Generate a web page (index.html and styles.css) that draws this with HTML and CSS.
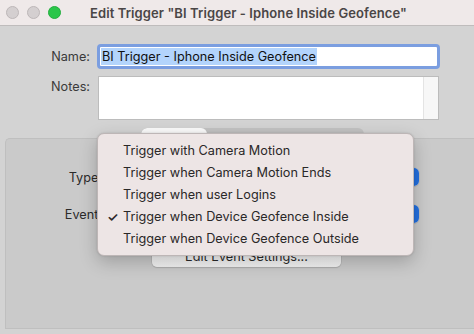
FILE: index.html
```html
<!DOCTYPE html>
<html>
<head>
<meta charset="utf-8">
<link rel="stylesheet" href="styles.css">
</head>
<body>
<div class="window">
  <div class="titlebar">
    <div class="lights">
      <span class="light"></span>
      <span class="light"></span>
      <span class="light green"></span>
    </div>
    <div class="title">Edit Trigger "BI Trigger - Iphone Inside Geofence"</div>
  </div>
  <div class="form">
    <div class="row">
      <label class="lbl">Name:</label>
      <div class="namefield"><span class="sel">BI Trigger - Iphone Inside Geofence</span></div>
    </div>
    <div class="row notes-row">
      <label class="lbl">Notes:</label>
      <div class="notes"><div class="scroll"></div></div>
    </div>
  </div>
  <div class="tabview">
    <div class="tabs">
      <span class="tab active">Trigger</span>
      <span class="tab">Conditions</span>
      <span class="tab">Actions</span>
    </div>
    <div class="box">
      <div class="prow">
        <span class="plbl">Type:</span>
        <div class="popup"><span class="arrow"></span></div>
      </div>
      <div class="prow">
        <span class="plbl">Event:</span>
        <div class="popup"><span class="arrow"></span></div>
      </div>
      <div class="btnrow">
        <div class="btn">Edit Event Settings...</div>
      </div>
    </div>
  </div>
  <div class="menu">
    <div class="item">Trigger with Camera Motion</div>
    <div class="item">Trigger when Camera Motion Ends</div>
    <div class="item">Trigger when user Logins</div>
    <div class="item checked"><span class="check">✓</span>Trigger when Device Geofence Inside</div>
    <div class="item">Trigger when Device Geofence Outside</div>
  </div>
</div>
</body>
</html>
```
FILE: styles.css
```css
html, body {
  margin: 0;
  padding: 0;
}
body {
  width: 474px;
  height: 334px;
  overflow: hidden;
  background: #d3d3d3;
  font-family: Inter, "Noto Sans", sans-serif;
  font-size: 12.7px;
  color: #2b2b2b;
}
.window {
  position: relative;
  width: 474px;
  height: 334px;
  overflow: hidden;
}
.titlebar {
  height: 26px;
  background: #efe9e9;
  border-bottom: 1px solid #bfbcbc;
  display: flex;
  align-items: center;
  box-sizing: border-box;
}
.lights {
  display: flex;
  gap: 8px;
  padding-left: 6px;
}
.light {
  width: 11px;
  height: 11px;
  border-radius: 50%;
  background: #d4cfd0;
  border: 0.5px solid #bdb7b8;
}
.light.green {
  background: #2bc64a;
  border-color: #24ae3f;
}
.title {
  margin-left: 29px;
  font-weight: 600;
  color: #4a4646;
  font-size: 13px;
  letter-spacing: 0.1px;
}
.form {
  padding: 18px 0 0 0;
}
.row {
  display: flex;
  align-items: center;
}
.lbl {
  width: 90px;
  text-align: right;
  color: #3a3a3a;
  margin-right: 7px;
}
.namefield {
  width: 336px;
  height: 19px;
  border: 3px solid #7b9ee0;
  border-radius: 4px;
  background: #fff;
  display: flex;
  align-items: center;
  padding-left: 1px;
}
.sel {
  background: #b3d4fc;
  color: #111;
  padding: 0 1px;
  line-height: 17px;
}
.notes-row {
  margin-top: 7px;
  align-items: flex-start;
}
.notes-row .lbl {
  padding-top: 3px;
  margin-right: 8px;
}
.notes {
  width: 339px;
  height: 42px;
  border: 1px solid #bcbcbc;
  background: #fff;
  display: flex;
  justify-content: flex-end;
}
.scroll {
  width: 14px;
  background: #f7f7f7;
  border-left: 1px solid #e4e4e4;
}
.tabview {
  padding-top: 8px;
  position: relative;
  padding-left: 5px;
}
.tabs {
  position: absolute;
  left: 141px;
  top: 8px;
  display: flex;
  height: 21px;
  border-radius: 6px;
  background: #c2c2c2;
  overflow: hidden;
  z-index: 1;
}
.tab {
  line-height: 21px;
  padding: 0 12px;
  color: #2b2b2b;
}
.tab.active {
  background: #fbfbfb;
  width: 42px;
  border-radius: 6px;
  text-align: center;
}
.box {
  margin-top: 10px;
  height: 160px;
  background: #cacaca;
  border: 1px solid #bfbfbf;
  border-right: none;
  border-radius: 5px 0 0 0;
  padding-top: 29px;
}
.prow {
  display: flex;
  align-items: center;
  height: 18px;
  margin-bottom: 19px;
}
.plbl {
  width: 96px;
  text-align: right;
  margin-right: 2px;
}
.popup {
  width: 315px;
  height: 18px;
  background: #fff;
  border-radius: 5px;
  box-shadow: 0 0 0 0.5px #b5b5b5, 0 1px 1px rgba(0,0,0,0.1);
  position: relative;
}
.arrow {
  position: absolute;
  right: 0;
  top: 0;
  width: 16px;
  height: 18px;
  background: #2470e0;
  border-radius: 5px;
}
.btnrow {
  padding-left: 146px;
  padding-top: 4px;
}
.btn {
  width: 189px;
  height: 21px;
  background: linear-gradient(#fdfdfd, #f1f1f1);
  border-radius: 5px;
  box-shadow: 0 0 0 0.5px #b0b0b0, 0 1px 1px rgba(0,0,0,0.15);
  text-align: center;
  line-height: 21px;
  color: #2b2b2b;
}
.menu {
  position: absolute;
  left: 97px;
  top: 133px;
  width: 317px;
  box-sizing: border-box;
  padding: 6px 0 5px 0;
  background: #ede5e5;
  border: 0.5px solid #bdb6b6;
  border-radius: 7px;
  box-shadow: 0 6px 18px rgba(0,0,0,0.22), 0 0 2px rgba(0,0,0,0.15);
  z-index: 5;
}
.item {
  height: 22px;
  line-height: 22px;
  padding-left: 25px;
  position: relative;
  color: #2a2828;
  white-space: nowrap;
}
.check {
  position: absolute;
  left: 9px;
  top: 0;
  font-size: 13px;
  font-weight: 600;
}
```
